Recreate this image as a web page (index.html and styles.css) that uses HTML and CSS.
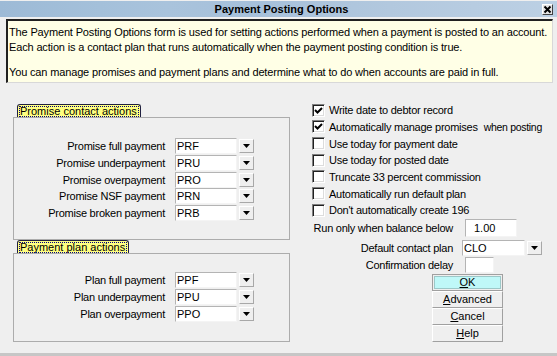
FILE: index.html
```html
<!DOCTYPE html>
<html>
<head>
<meta charset="utf-8">
<link rel="stylesheet" href="styles.css">
</head>
<body>
<div class="window">
  <div class="titlebar">
    <span class="title">Payment Posting Options</span>
    <span class="close"><svg width="9" height="9" viewBox="0 0 9 9"><path d="M1.5 1.5 L7.5 7.5 M7.5 1.5 L1.5 7.5" stroke="#000" stroke-width="2" fill="none"/></svg></span>
  </div>
  <div class="info">
    <p>The Payment Posting Options form is used for setting actions performed when a payment is posted to an account.<br>Each action is a contact plan that runs automatically when the payment posting condition is true.</p>
    <p class="p2">You can manage promises and payment plans and determine what to do when accounts are paid in full.</p>
  </div>
  <div class="main">
    <div class="left">
      <div class="tab"><span class="tab-in">Promise contact actions</span></div>
      <div class="box box1">
        <div class="row"><span class="lbl">Promise full payment</span><span class="inp">PRF</span><span class="dd"><svg width="7" height="4" viewBox="0 0 7 4"><path d="M0 0H7L3.5 4Z" fill="#000"/></svg></span></div>
        <div class="row"><span class="lbl">Promise underpayment</span><span class="inp">PRU</span><span class="dd"><svg width="7" height="4" viewBox="0 0 7 4"><path d="M0 0H7L3.5 4Z" fill="#000"/></svg></span></div>
        <div class="row"><span class="lbl">Promise overpayment</span><span class="inp">PRO</span><span class="dd"><svg width="7" height="4" viewBox="0 0 7 4"><path d="M0 0H7L3.5 4Z" fill="#000"/></svg></span></div>
        <div class="row"><span class="lbl">Promise NSF payment</span><span class="inp">PRN</span><span class="dd"><svg width="7" height="4" viewBox="0 0 7 4"><path d="M0 0H7L3.5 4Z" fill="#000"/></svg></span></div>
        <div class="row"><span class="lbl">Promise broken payment</span><span class="inp">PRB</span><span class="dd"><svg width="7" height="4" viewBox="0 0 7 4"><path d="M0 0H7L3.5 4Z" fill="#000"/></svg></span></div>
      </div>
      <div class="tab"><span class="tab-in">Payment plan actions</span></div>
      <div class="box box2">
        <div class="row"><span class="lbl">Plan full payment</span><span class="inp">PPF</span><span class="dd"><svg width="7" height="4" viewBox="0 0 7 4"><path d="M0 0H7L3.5 4Z" fill="#000"/></svg></span></div>
        <div class="row"><span class="lbl">Plan underpayment</span><span class="inp">PPU</span><span class="dd"><svg width="7" height="4" viewBox="0 0 7 4"><path d="M0 0H7L3.5 4Z" fill="#000"/></svg></span></div>
        <div class="row"><span class="lbl">Plan overpayment</span><span class="inp">PPO</span><span class="dd"><svg width="7" height="4" viewBox="0 0 7 4"><path d="M0 0H7L3.5 4Z" fill="#000"/></svg></span></div>
      </div>
    </div>
    <div class="right">
      <div class="chk"><span class="cb"><svg width="9" height="9" viewBox="0 0 9 9"><path d="M1 4 L3.5 6.5 L8 2" stroke="#000" stroke-width="2" fill="none"/></svg></span><span class="clbl">Write date to debtor record</span></div>
      <div class="chk"><span class="cb"><svg width="9" height="9" viewBox="0 0 9 9"><path d="M1 4 L3.5 6.5 L8 2" stroke="#000" stroke-width="2" fill="none"/></svg></span><span class="clbl">Automatically manage promises</span><span class="extra">when posting</span></div>
      <div class="chk"><span class="cb"></span><span class="clbl">Use today for payment date</span></div>
      <div class="chk"><span class="cb"></span><span class="clbl">Use today for posted date</span></div>
      <div class="chk"><span class="cb"></span><span class="clbl">Truncate 33 percent commission</span></div>
      <div class="chk"><span class="cb"></span><span class="clbl">Automatically run default plan</span></div>
      <div class="chk"><span class="cb"></span><span class="clbl">Don't automatically create 196</span></div>
      <div class="field f-run"><span class="flbl">Run only when balance below</span><span class="inp inp-run">1.00</span></div>
      <div class="field f-plan"><span class="flbl">Default contact plan</span><span class="inp inp-plan">CLO</span><span class="dd"><svg width="7" height="4" viewBox="0 0 7 4"><path d="M0 0H7L3.5 4Z" fill="#000"/></svg></span></div>
      <div class="field f-conf"><span class="flbl">Confirmation delay</span><span class="inp inp-conf"></span></div>
      <div class="buttons">
        <div class="btn btn-ok"><span class="btn-in"><u>O</u>K</span></div>
        <div class="btn"><span class="btn-in"><u>A</u>dvanced</span></div>
        <div class="btn"><span class="btn-in"><u>C</u>ancel</span></div>
        <div class="btn"><span class="btn-in"><u>H</u>elp</span></div>
      </div>
    </div>
  </div>
  <div class="bottombar"></div>
</div>
</body>
</html>
```

FILE: styles.css
```css
* { box-sizing: border-box; }
html, body { margin: 0; padding: 0; }
body {
  width: 557px;
  height: 356px;
  overflow: hidden;
  background: #efefef;
  font-family: "Liberation Sans", Arial, sans-serif;
  font-size: 11px;
  color: #000;
}
.window { width: 557px; height: 356px; display: flex; flex-direction: column; }

.titlebar {
  height: 16px;
  margin-top: 1px;
  display: flex;
  align-items: center;
  justify-content: center;
  position: relative;
  background: linear-gradient(to right, #9dbad6 0%, #a4c0da 18%, #a9c3dc 30%, #a6c0da 45%, #b2c8de 70%, #bcd0e4 100%);
}
.title { font-weight: bold; font-size: 11px; padding-left: 6px; }
.close {
  position: absolute;
  right: 4px;
  top: 3px;
  width: 11px;
  height: 11px;
  background: #e4e4e4;
  border-top: 1px solid #fff;
  border-left: 1px solid #fff;
  border-right: 1px solid #404040;
  border-bottom: 1px solid #404040;
  display: flex;
  align-items: center;
  justify-content: center;
}

.info {
  margin: 2px 4px 0 6px;
  height: 64px;
  background: #ffffe6;
  border-top: 2px solid #202020;
  border-left: 2px solid #202020;
  border-right: 1px solid #d8d8d8;
  border-bottom: 1px solid #d8d8d8;
  padding: 4px 0 0 1px;
  letter-spacing: -0.15px;
}
.info p { margin: 0; line-height: 15px; white-space: nowrap; }
.info .p2 { margin-top: 10px; }

.main { flex: 1; display: flex; }
.left { margin-left: 13px; width: 277px; padding-top: 21px; display: flex; flex-direction: column; }
.tab {
  align-self: flex-start;
  margin-left: 4px;
  height: 13px;
  background: #ffff80;
  border: 1px solid #202040;
  border-bottom: none;
  border-radius: 3px 3px 0 0;
  padding: 1px 1px 0 1px;
  display: flex;
}
.tab-in {
  outline: 1px dotted #000080;
  outline-offset: -1px;
  line-height: 11px;
  padding: 0 2px 0 1px;
}
.box { border: 1px solid #acacac; }
.box1 { height: 123px; padding-top: 20px; }
.box2 { height: 89px; padding-top: 18px; }

.row { display: flex; align-items: center; height: 16.67px; }
.lbl { width: 151px; text-align: right; letter-spacing: -0.25px; white-space: nowrap; }
.inp {
  display: block;
  height: 16px;
  line-height: 14px;
  background: #fff;
  border-top: 1px solid #b4b4b4;
  border-left: 1px solid #b4b4b4;
  border-right: 1px solid #f4f4f4;
  border-bottom: 1px solid #f4f4f4;
  padding-left: 1px;
}
.row .inp { margin-left: 10px; width: 62px; }
.dd {
  margin-left: 2px;
  width: 15px;
  height: 14px;
  background: #efefef;
  border-top: 1px solid #fff;
  border-left: 1px solid #fff;
  border-right: 1px solid #a8a8a8;
  border-bottom: 1px solid #a8a8a8;
  display: flex;
  align-items: center;
  justify-content: center;
}

.right { margin-left: 20px; padding-top: 19px; display: flex; flex-direction: column; width: 247px; }
.chk { display: flex; align-items: center; height: 16.67px; white-space: nowrap; }
.cb {
  margin-left: 2px;
  width: 13px;
  height: 13px;
  background: #fff;
  border-top: 1px solid #808080;
  border-left: 1px solid #808080;
  border-right: 1px solid #fff;
  border-bottom: 1px solid #fff;
  box-shadow: inset 1px 1px 0 #202020, inset -1px -1px 0 #dcdcdc;
  display: flex;
  align-items: center;
  justify-content: center;
}
.clbl { margin-left: 4px; letter-spacing: -0.25px; }
.extra { margin-left: 6px; letter-spacing: -0.3px; font-size: 10.5px; }

.field { display: flex; align-items: center; white-space: nowrap; }
.flbl { width: 143px; text-align: right; letter-spacing: -0.25px; }
.f-run { height: 18px; margin-top: 0; }
.f-plan { height: 16px; margin-top: 3px; }
.f-conf { height: 16px; margin-top: 1px; }
.inp-run { margin-left: 12px; width: 52px; height: 18px; line-height: 16px; padding-left: 8px; }
.inp-plan { margin-left: 9px; width: 63px; }
.inp-conf { margin-left: 12px; width: 29px; }
.f-plan .dd { margin-left: 2px; }

.buttons { margin-top: 1px; margin-left: 122px; width: 71px; display: flex; flex-direction: column; }
.btn {
  height: 17px;
  border-top: 1px solid #fff;
  border-left: 1px solid #fff;
  border-right: 1px solid #a0a0a0;
  border-bottom: 1px solid #a0a0a0;
  display: flex;
  align-items: center;
  justify-content: center;
  background: #efefef;
}
.btn-in { line-height: 13px; }
.btn-ok {
  border: 1px solid #a0a0a0;
  padding: 1px;
}
.btn-ok .btn-in {
  flex: 1;
  align-self: stretch;
  text-align: center;
  background: #bff8f8;
  border: 1px solid #9cc8c8;
  line-height: 11px;
}
u { text-decoration: underline; text-underline-offset: 1px; }

.bottombar { height: 3px; background: #c6c6c6; }
```
